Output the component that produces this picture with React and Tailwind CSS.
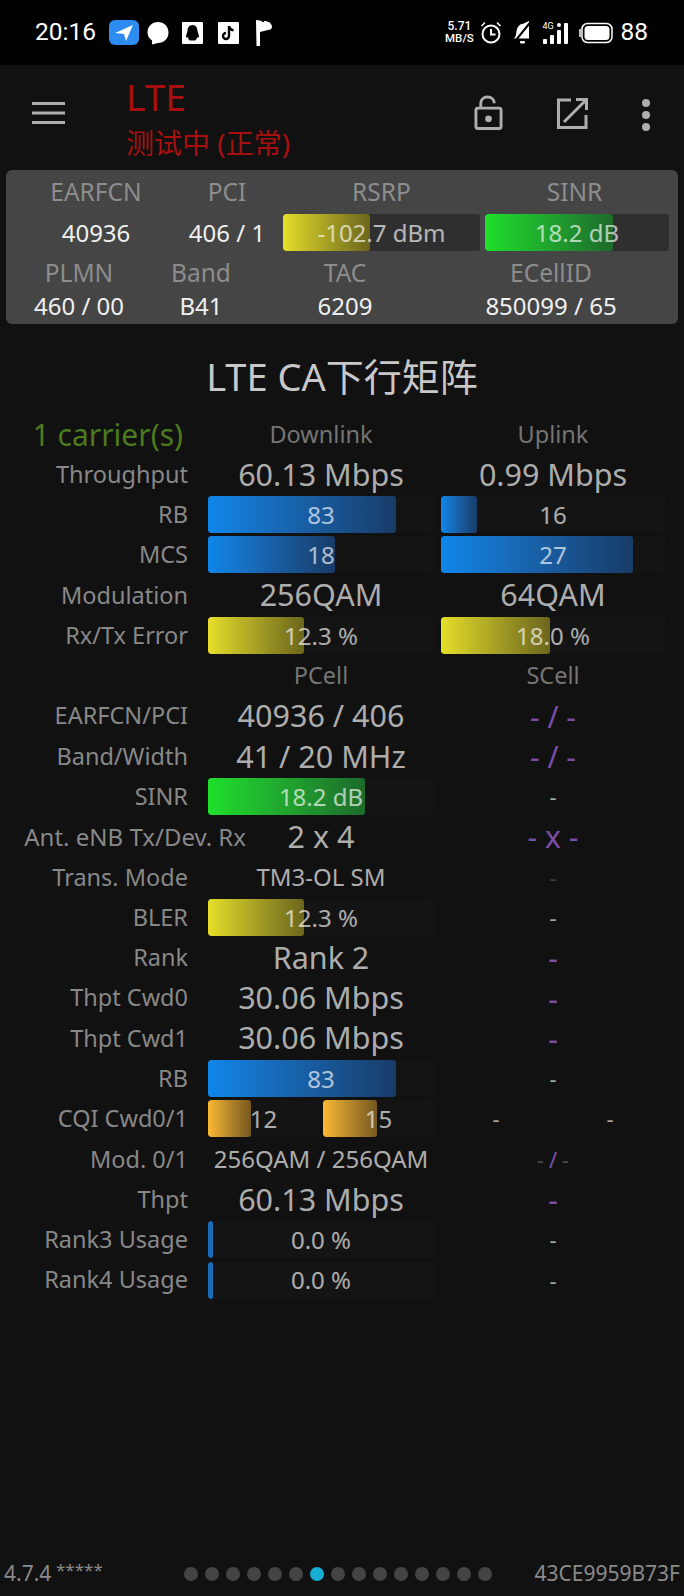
const sans = 'font-["Noto_Sans","Noto_Sans_CJK_SC",sans-serif]';

const blue = 'bg-gradient-to-r from-[#0e86ea] to-[#173c68]';
const yellow = 'bg-gradient-to-r from-[#e6df2a] to-[#6c661c]';
const green = 'bg-gradient-to-r from-[#1ee02a] to-[#1c6b2a]';
const orange = 'bg-gradient-to-r from-[#fbb934] to-[#76581f]';

function Bar({ width, fill, text, track = 'bg-[#141414]', size = 'text-[24px]' }) {
  return (
    <div className={`relative h-[37px] w-full rounded-[3px] overflow-hidden ${track}`}>
      <div className={`h-full rounded-[3px] ${fill}`} style={{ width }} />
      <div className={`absolute inset-0 flex items-center justify-center text-white/65 ${size}`}>{text}</div>
    </div>
  );
}

function Value({ children, className = 'text-[30.5px] text-[#adadad]' }) {
  return <div className={`flex items-center justify-center whitespace-nowrap ${className}`}>{children}</div>;
}

const Purple = ({ children }) => <Value className="text-[30px] text-[#7a4ea8]">{children}</Value>;
const Dash = () => <Value className="text-[22px] text-[#a8a8a8]">-</Value>;

function Row({ label, left, right, labelClass = 'text-[23.500px] text-[#888888]' }) {
  return (
    <div className="flex h-[40.29px] items-center">
      <div className={`flex justify-end w-[188px] whitespace-nowrap ${labelClass}`}>{label}</div>
      <div className="w-[226px] ml-[20px]">{left}</div>
      <div className="w-[224px] ml-[7px]">{right}</div>
    </div>
  );
}

function TopCell({ label }) {
  return <div className="text-center text-[24.500px] leading-[34px] text-[#8d8d8d] whitespace-nowrap">{label}</div>;
}

function StatusBar() {
  return (
    <div className="h-[65px] bg-black flex items-center pl-[35px] text-white shrink-0">
      <span className="text-[24.500px] w-[74px] font-['Roboto',sans-serif]">20:16</span>
      <svg width="30" height="25" viewBox="0 0 30 25" className="mr-[8px]">
        <rect width="30" height="25" rx="6" fill="#2d8cf0" />
        <path d="M6 13 L24 5 L17 21 L15 14 Z" fill="#fff" />
      </svg>
      <svg width="22" height="24" viewBox="0 0 22 24" className="mr-[13px]">
        <path d="M11 1 C17 1 21.500 5.500 21.500 11.500 C21.500 17.500 17 22 11 22 L5 23.500 L5 19.500 C2 17.500 .5 14.500 .5 11.500 C.5 5.500 5 1 11 1 Z" fill="#fff" />
      </svg>
      <svg width="21" height="22" viewBox="0 0 21 22" className="mr-[15px]">
        <rect width="21" height="22" rx="1" fill="#fff" />
        <path d="M10.500 3 C14 3 15.500 6 15.500 9 L17 14 C17 16 16 16 15 15 C15 17 14 18 13 18.500 H8 C7 18 6 17 6 15 C5 16 4 16 4 14 L5.500 9 C5.500 6 7 3 10.500 3 Z" fill="#000" />
      </svg>
      <svg width="21" height="22" viewBox="0 0 21 22" className="mr-[16px]">
        <rect width="21" height="22" rx="1" fill="#fff" />
        <path d="M11 4 V14 A3 3 0 1 1 8 11 M11 4 C11.500 6.500 13 8 15.500 8.300" stroke="#000" strokeWidth="2.400" fill="none" />
      </svg>
      <svg width="18" height="27" viewBox="0 0 18 27">
        <path d="M1 1 L5 1.500 L9 3.500 L9 2 C13 2 17 4 17 8 C17 10 15 11 13 11 L5 13 V27 H1.500 Z" fill="#fff" />
      </svg>

      <div className="ml-auto flex items-center pr-[36px]">
        <div className="w-[30px] mr-[6px] flex flex-col items-center text-[12px] leading-[11.500px] font-['Roboto',sans-serif] font-medium">
          <span>5.71</span>
          <span className="text-[11.500px]">MB/S</span>
        </div>
        <svg width="22" height="24" viewBox="0 0 22 24" className="mr-[11px]" fill="none" stroke="#fff">
          <circle cx="11" cy="13" r="8.500" strokeWidth="2" />
          <path d="M11 8 V13.500 H15.500" strokeWidth="2" />
          <path d="M1.500 5 L5 1.500 M20.500 5 L17 1.500" strokeWidth="1.500" />
        </svg>
        <svg width="19" height="25" viewBox="0 0 19 25" className="mr-[10px]">
          <path d="M16 1 V18.500 H1 C3.500 16 3 13 4 9 C5 6 7 4 9.500 4 Z" fill="#fff" />
          <path d="M18 1.500 L3 20" stroke="#000" strokeWidth="2" />
          <rect x="7" y="21" width="5" height="2.500" rx="1" fill="#fff" />
        </svg>
        <div className="relative w-[28px] h-[24px] mr-[8px]">
          <span className="absolute left-0 top-0 text-[9px] leading-[10px] font-['Roboto',sans-serif]">4G</span>
          <svg width="28" height="24" viewBox="0 0 28 24" fill="#fff">
            <rect x="1" y="18" width="4" height="5" rx="1" />
            <rect x="8" y="14" width="4" height="9" rx="1" />
            <rect x="15" y="9" width="4" height="14" rx="1" />
            <rect x="22" y="2" width="4" height="21" rx="1" />
            <rect x="15" y="2" width="4" height="4" rx="2" />
          </svg>
        </div>
        <svg width="35" height="22" viewBox="0 0 35 22" className="mr-[7px]">
          <rect x="4" y="1.500" width="30" height="19" rx="5.500" fill="none" stroke="#fff" strokeWidth="1.500" />
          <rect x="6.500" y="4" width="25" height="14" rx="3.500" fill="#fff" />
          <path d="M2 7 V15" stroke="#fff" strokeWidth="1.500" />
        </svg>
        <span className="text-[24.500px] font-['Roboto',sans-serif]">88</span>
      </div>
    </div>
  );
}

function AppBar() {
  return (
    <div className="h-[105px] flex shrink-0">
      <svg width="33" height="24" viewBox="0 0 33 24" className="ml-[32px] mt-[36px]" fill="#aeaeae">
        <rect y="1" width="33" height="3" />
        <rect y="10.500" width="33" height="3" />
        <rect y="20" width="33" height="3" />
      </svg>
      <div className="ml-[61px] text-[#a80f0f] pt-[7px]">
        <div className="text-[37px] leading-[50px]">LTE</div>
        <div className="text-[28px] leading-[44px] -mt-[1px]">测试中 (正常)</div>
      </div>
      <div className="ml-auto flex items-start pt-[30px] pr-[33px]">
        <svg width="29" height="36" viewBox="0 0 30 36" fill="none" stroke="#aeaeae" strokeWidth="3">
          <rect x="2" y="13" width="26" height="21" rx="2" />
          <path d="M7 13 V8 C7 4 10 1.500 14 1.500 C18 1.500 21 4 21 8" />
          <circle cx="15" cy="24" r="3.500" fill="#aeaeae" stroke="none" />
        </svg>
        <svg width="33" height="33" viewBox="0 0 33 33" fill="none" stroke="#aeaeae" strokeWidth="3" className="ml-[53px] mt-[2px]">
          <path d="M15 3 H2.500 V30.500 H30 V18" />
          <path d="M20 2.500 H30.500 V13 M30 3 L8 25" />
        </svg>
        <svg width="10" height="32" viewBox="0 0 10 32" fill="#aeaeae" className="ml-[52px] mt-[4px]">
          <circle cx="5" cy="4" r="4" />
          <circle cx="5" cy="16" r="4" />
          <circle cx="5" cy="28" r="4" />
        </svg>
      </div>
    </div>
  );
}

function InfoCard() {
  return (
    <div className="mx-[6px] h-[154px] rounded-[6px] bg-[#454545] shrink-0 pt-[5px]">
      <div className="grid grid-cols-[150px_112px_197px_189px] pl-[15px]">
        <TopCell label="EARFCN" />
        <TopCell label="PCI" />
        <TopCell label="RSRP" />
        <TopCell label="SINR" />
      </div>
      <div className="grid grid-cols-[150px_112px_197px_189px] pl-[15px] mt-[5px] items-center text-[24px] text-[#f0f0f0]">
        <div className="text-center">40936</div>
        <div className="text-center">406 / 1</div>
        <Bar width={87} fill={yellow} text="-102.7 dBm" track="bg-[#2f2f2f]" />
        <div className="pl-[5px]">
          <Bar width={128} fill={green} text="18.2 dB" track="bg-[#2f2f2f]" />
        </div>
      </div>
      <div className="grid grid-cols-[146px_98px_190px_222px] mt-[5px]">
        <TopCell label="PLMN" />
        <TopCell label="Band" />
        <TopCell label="TAC" />
        <TopCell label="ECellID" />
      </div>
      <div className="grid grid-cols-[146px_98px_190px_222px] text-[24px] text-[#f0f0f0] leading-[32px]">
        <div className="text-center">460 / 00</div>
        <div className="text-center">B41</div>
        <div className="text-center">6209</div>
        <div className="text-center">850099 / 65</div>
      </div>
    </div>
  );
}

function Matrix() {
  const head = 'text-[23.500px] text-[#757575]';
  return (
    <div className="shrink-0">
      <Row
        label={<span className="mr-[5px]">1 carrier(s)</span>}
        labelClass="text-[30px] text-[#4c7a1e]"
        left={<Value className={head}>Downlink</Value>}
        right={<Value className={head}>Uplink</Value>}
      />
      <Row label="Throughput" left={<Value>60.13 Mbps</Value>} right={<Value>0.99 Mbps</Value>} />
      <Row label="RB" left={<Bar width={188} fill={blue} text="83" />} right={<Bar width={36} fill={blue} text="16" />} />
      <Row label="MCS" left={<Bar width={127} fill={blue} text="18" />} right={<Bar width={192} fill={blue} text="27" />} />
      <Row label="Modulation" left={<Value>256QAM</Value>} right={<Value>64QAM</Value>} />
      <Row label="Rx/Tx Error" left={<Bar width={96} fill={yellow} text="12.3 %" />} right={<Bar width={109} fill={yellow} text="18.0 %" />} />
      <Row label="" left={<Value className={head}>PCell</Value>} right={<Value className={head}>SCell</Value>} />
      <Row label="EARFCN/PCI" left={<Value>40936 / 406</Value>} right={<Purple>- / -</Purple>} />
      <Row label="Band/Width" left={<Value>41 / 20 MHz</Value>} right={<Purple>- / -</Purple>} />
      <Row label="SINR" left={<Bar width={157} fill={green} text="18.2 dB" />} right={<Dash />} />
      <Row
        label={<span className="-mr-[58px] text-[24px]">Ant. eNB Tx/Dev. Rx</span>}
        left={<Value>2 x 4</Value>}
        right={<Purple>- x -</Purple>}
      />
      <Row
        label="Trans. Mode"
        left={<Value className="text-[24px] text-[#adadad]">TM3-OL SM</Value>}
        right={<Value className="text-[22px] text-[#3f3f3f]">-</Value>}
      />
      <Row label="BLER" left={<Bar width={96} fill={yellow} text="12.3 %" />} right={<Dash />} />
      <Row label="Rank" left={<Value>Rank 2</Value>} right={<Purple>-</Purple>} />
      <Row label="Thpt Cwd0" left={<Value>30.06 Mbps</Value>} right={<Purple>-</Purple>} />
      <Row label="Thpt Cwd1" left={<Value>30.06 Mbps</Value>} right={<Purple>-</Purple>} />
      <Row label="RB" left={<Bar width={188} fill={blue} text="83" />} right={<Dash />} />
      <Row
        label="CQI Cwd0/1"
        left={
          <div className="grid grid-cols-2 gap-x-[4px]">
            <Bar width={43} fill={orange} text="12" />
            <Bar width={54} fill={orange} text="15" />
          </div>
        }
        right={
          <div className="grid grid-cols-2 gap-x-[4px]">
            <Dash />
            <Dash />
          </div>
        }
      />
      <Row
        label="Mod. 0/1"
        left={<Value className="text-[24px] text-[#adadad]">256QAM / 256QAM</Value>}
        right={
          <Value className="text-[22px] text-[#4a4a4a]">
            - <span className="mx-[5px] text-[#7a4ea8]">/</span> -
          </Value>
        }
      />
      <Row label="Thpt" left={<Value>60.13 Mbps</Value>} right={<Purple>-</Purple>} />
      <Row label="Rank3 Usage" left={<Bar width={5} fill="bg-[#1a6cb8]" text="0.0 %" />} right={<Dash />} />
      <Row label="Rank4 Usage" left={<Bar width={5} fill="bg-[#1a6cb8]" text="0.0 %" />} right={<Dash />} />
    </div>
  );
}

function Footer() {
  const dots = Array.from({ length: 15 }, (_, i) => i);
  return (
    <div className="mt-auto h-[44px] flex items-center pl-[4px] pr-[4px] text-[#8a8a8a] shrink-0">
      <span className="text-[21px] w-[52px]">4.7.4</span>
      <span className="text-[17px] leading-[18px] w-[128px] pb-[8px]">*****</span>
      <div className="flex gap-[7px]">
        {dots.map((i) => (
          <div key={i} className={`w-[14px] h-[14px] rounded-full ${i === 6 ? 'bg-[#17aed4]' : 'bg-[#444444]'}`} />
        ))}
      </div>
      <span className="ml-auto text-[21px]">43CE9959B73F</span>
    </div>
  );
}

export default function App() {
  return (
    <div className={`w-[684px] h-[1596px] bg-[#111111] flex flex-col overflow-hidden ${sans}`}>
      <StatusBar />
      <AppBar />
      <InfoCard />
      <div className="h-[90px] pt-[14px] flex items-center justify-center text-[38px] text-[#c8c8c8] shrink-0">LTE CA下行矩阵</div>
      <Matrix />
      <Footer />
    </div>
  );
}
